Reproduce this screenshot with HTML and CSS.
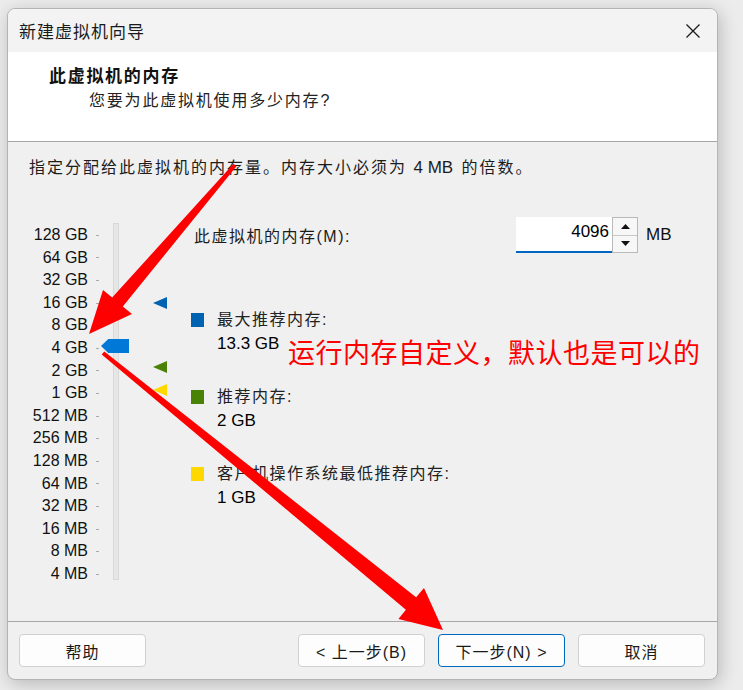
FILE: index.html
```html
<!DOCTYPE html>
<html lang="zh-CN">
<head>
  <meta charset="UTF-8" />
  <title>新建虚拟机向导</title>
  <link rel="stylesheet" href="styles.css">
</head>
<body>

<div class="window">
  <div class="titlebar">
    <span class="title">新建虚拟机向导</span>
    <svg class="close" width="14" height="14" viewBox="0 0 14 14">
      <path d="M0.5 0.5 L13.5 13.5 M13.5 0.5 L0.5 13.5" stroke="#1a1a1a" stroke-width="1.3" fill="none"/>
    </svg>
  </div>

  <div class="header">
    <h1>此虚拟机的内存</h1>
    <p>您要为此虚拟机使用多少内存?</p>
  </div>

  <div class="content">
    <p class="intro">指定分配给此虚拟机的内存量。内存大小必须为 <span class="latin">4 MB</span> 的倍数。</p>

    <div class="memory">
      <div class="scale">
        <ul class="labels">
          <li>128 GB</li><li>64 GB</li><li>32 GB</li><li>16 GB</li>
          <li>8 GB</li><li>4 GB</li><li>2 GB</li><li>1 GB</li>
          <li>512 MB</li><li>256 MB</li><li>128 MB</li><li>64 MB</li>
          <li>32 MB</li><li>16 MB</li><li>8 MB</li><li>4 MB</li>
        </ul>
        <div class="track"></div>
        <span class="thumb"></span>
        <span class="mark max"></span>
        <span class="mark rec"></span>
        <span class="mark min"></span>
      </div>

      <div class="settings">
        <div class="amount">
          <label class="amount-label">此虚拟机的内存(M):</label>
          <div class="spin">
            <div class="spin-value">4096</div>
            <div class="spin-btns">
              <span class="up"><svg width="9" height="5" viewBox="0 0 9 5"><path d="M0 5 L4.5 0 L9 5 Z" fill="#111"/></svg></span>
              <span class="down"><svg width="9" height="5" viewBox="0 0 9 5"><path d="M0 0 L9 0 L4.5 5 Z" fill="#111"/></svg></span>
            </div>
          </div>
          <span class="unit">MB</span>
        </div>

        <div class="legend">
          <div class="item">
            <i class="sq blue"></i>
            <div>
              <div class="name">最大推荐内存:</div>
              <div class="value">13.3 GB</div>
            </div>
          </div>
          <div class="item">
            <i class="sq green"></i>
            <div>
              <div class="name">推荐内存:</div>
              <div class="value">2 GB</div>
            </div>
          </div>
          <div class="item">
            <i class="sq yellow"></i>
            <div>
              <div class="name">客户机操作系统最低推荐内存:</div>
              <div class="value">1 GB</div>
            </div>
          </div>
        </div>
      </div>
    </div>
  </div>

  <div class="footer">
    <button class="btn">帮助</button>
    <div class="spacer"></div>
    <button class="btn">&lt; 上一步(B)</button>
    <button class="btn focus">下一步(N) &gt;</button>
    <button class="btn">取消</button>
  </div>
</div>

<!-- annotation layer -->
<svg class="annot" width="743" height="690" viewBox="0 0 743 690">
  <polygon fill="#ff0000" points="89,334 103,290 112.2,297.5 233.5,163.7 236.5,166.3 122.8,306.5 132,314"/>
  <polygon fill="#ff0000" points="443,630 398.4,619 405.9,609.7 101.7,354.6 104.3,351.4 416.1,597.3 424,588"/>
</svg>
<div class="note">运行内存自定义，默认也是可以的</div>

</body>
</html>
```

FILE: styles.css
```css
body {
  margin: 0;
  width: 743px;
  height: 690px;
  position: relative;
  overflow: hidden;
  background: #ececec;
  font-family: 'Liberation Sans', 'Noto Sans CJK SC', sans-serif;
  font-size: 16px;
  color: #1c1c1c;
}
.window {
  box-sizing: border-box;
  margin: 8px 0 0 7px;
  width: 711px;
  height: 672px;
  border: 1px solid #b4b4b4;
  border-radius: 8px;
  overflow: hidden;
  background: #f0f0f0;
  box-shadow: 2px 4px 18px rgba(0,0,0,0.22);
}
.titlebar {
  height: 43px;
  background: #f3f3f3;
  display: flex;
  align-items: center;
  justify-content: space-between;
  padding: 0 17px 0 11px;
}
.title {
  font-family: 'Noto Sans CJK SC', sans-serif;
  font-size: 17px;
  letter-spacing: 1px;
  color: #1a1a1a;
}
.header {
  height: 90px;
  background: #fff;
  border-bottom: 1px solid #a7a7a7;
  padding: 13px 0 0 41px;
  box-sizing: border-box;
}
.header h1 {
  margin: 0;
  font-size: 17px;
  line-height: 24px;
  font-weight: bold;
  letter-spacing: 1.7px;
  color: #111;
}
.header p {
  margin: 0 0 0 40px;
  font-size: 16px;
  line-height: 24px;
  letter-spacing: 1.8px;
  color: #222;
}
.content {
  height: 479px;
  padding-top: 14px;
  box-sizing: border-box;
}
.intro {
  margin: 0 0 37px 21px;
  line-height: 24px;
  letter-spacing: 2px;
}
.intro .latin {
  letter-spacing: 0;
  font-size: 17px;
  margin-right: 2px;
}
.memory {
  display: flex;
  padding-left: 12px;
}
.scale {
  position: relative;
  display: flex;
  width: 171px;
  height: 357px;
  margin-top: 6px;
}
.labels {
  list-style: none;
  margin: 0;
  padding: 1px 0 0;
  width: 80px;
}
.labels li {
  height: 22.6px;
  line-height: 22.6px;
  text-align: right;
  padding-right: 12px;
  background: linear-gradient(#a9a9a9, #a9a9a9) no-repeat right 1px center / 3px 1px;
  color: #111;
}
.track {
  box-sizing: border-box;
  width: 6px;
  height: 357px;
  margin-left: 13px;
  border: 1px solid #d8d8d8;
  background: #e6e6e6;
}
.thumb {
  position: absolute;
  left: 81px;
  top: 116px;
  width: 28px;
  height: 14px;
  background: #0078d7;
  clip-path: polygon(0 50%, 26% 0, 100% 0, 100% 100%, 26% 100%);
}
.mark {
  position: absolute;
  left: 133px;
  width: 14px;
  height: 12px;
  clip-path: polygon(0 50%, 100% 0, 100% 100%);
}
.mark.max { top: 74px; background: #0063b1; }
.mark.rec { top: 138px; background: #498205; }
.mark.min { top: 161px; background: #ffd800; }

.settings {
  flex: 1;
}
.amount {
  display: flex;
  align-items: center;
  height: 36px;
}
.amount-label {
  width: 322px;
  padding-left: 3px;
  letter-spacing: 1.5px;
}
.spin {
  display: flex;
  height: 36px;
}
.spin-value {
  box-sizing: border-box;
  width: 96px;
  height: 36px;
  background: #fff;
  border-bottom: 2px solid #0067c0;
  text-align: right;
  padding-right: 3px;
  line-height: 30px;
  font-size: 17px;
  color: #000;
}
.spin-btns {
  box-sizing: border-box;
  width: 26px;
  border: 1px solid #b9b9b9;
  background: #f7f7f7;
  display: flex;
  flex-direction: column;
}
.spin-btns span {
  flex: 1;
  display: flex;
  align-items: center;
  justify-content: center;
}
.spin-btns .up {
  border-bottom: 1px solid #c8c8c8;
}
.unit {
  margin-left: 8px;
  font-size: 17px;
  color: #111;
}
.legend {
  margin-top: 55px;
  display: flex;
  flex-direction: column;
  gap: 29px;
}
.item {
  display: flex;
  line-height: 24px;
}
.sq {
  width: 13px;
  height: 14px;
  margin: 5px 13px 0 0;
}
.sq.blue { background: #0063b1; }
.sq.green { background: #498205; }
.sq.yellow { background: #ffd800; }
.name {
  letter-spacing: 1.5px;
  color: #222;
}
.value {
  font-size: 17px;
  color: #000;
}
.footer {
  border-top: 1px solid #a7a7a7;
  padding: 12px 12px 0 11px;
  display: flex;
  gap: 13px;
}
.spacer {
  flex: 1;
}
.btn {
  box-sizing: border-box;
  width: 127px;
  height: 33px;
  background: #fdfdfd;
  border: 1px solid #d0d0d0;
  border-radius: 4px;
  font-family: 'Liberation Sans', 'Noto Sans CJK SC', sans-serif;
  font-size: 16px;
  letter-spacing: 1px;
  color: #1a1a1a;
  padding: 0;
}
.btn.focus {
  border-color: #0067c0;
}
.annot {
  position: absolute;
  left: 0;
  top: 0;
  pointer-events: none;
}
.note {
  position: absolute;
  left: 288px;
  top: 336px;
  font-family: 'Noto Sans CJK SC', sans-serif;
  font-size: 27px;
  line-height: 32px;
  letter-spacing: 0.5px;
  color: #ff0000;
  white-space: nowrap;
}
```
